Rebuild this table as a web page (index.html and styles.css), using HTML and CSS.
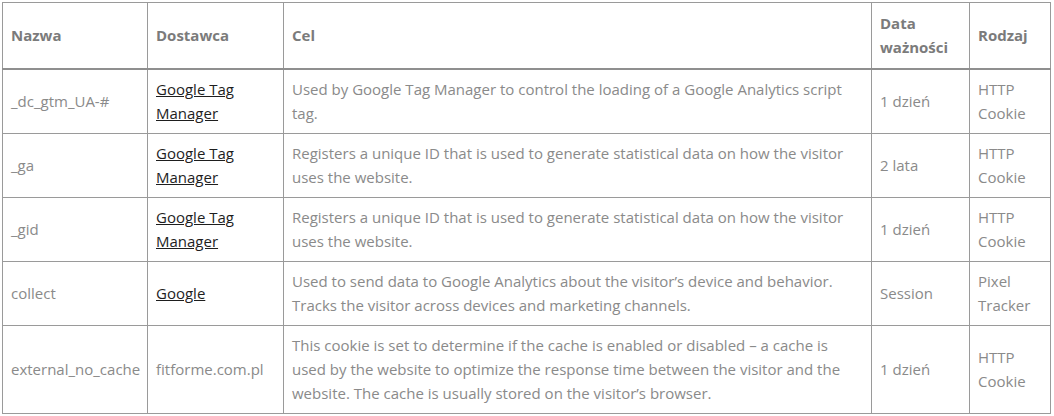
FILE: index.html
```html
<!DOCTYPE html>
<html lang="pl">
<head>
<meta charset="utf-8">
<title>Cookies</title>
<link rel="stylesheet" href="styles.css">
</head>
<body>
<div class="wrap">
<table class="cookies">
  <colgroup>
    <col class="c-name"><col class="c-prov"><col class="c-goal"><col class="c-exp"><col class="c-type">
  </colgroup>
  <thead>
    <tr><th>Nazwa</th><th>Dostawca</th><th>Cel</th><th>Data ważności</th><th>Rodzaj</th></tr>
  </thead>
  <tbody>
    <tr>
      <td>_dc_gtm_UA-#</td>
      <td><a href="#">Google Tag Manager</a></td>
      <td>Used by Google Tag Manager to control the loading of a Google Analytics script tag.</td>
      <td>1 dzień</td>
      <td>HTTP Cookie</td>
    </tr>
    <tr>
      <td>_ga</td>
      <td><a href="#">Google Tag Manager</a></td>
      <td>Registers a unique ID that is used to generate statistical data on how the visitor uses the website.</td>
      <td>2 lata</td>
      <td>HTTP Cookie</td>
    </tr>
    <tr>
      <td>_gid</td>
      <td><a href="#">Google Tag Manager</a></td>
      <td>Registers a unique ID that is used to generate statistical data on how the visitor uses the website.</td>
      <td>1 dzień</td>
      <td>HTTP Cookie</td>
    </tr>
    <tr>
      <td>collect</td>
      <td><a href="#">Google</a></td>
      <td>Used to send data to Google Analytics about the visitor’s device and behavior. Tracks the visitor across devices and marketing channels.</td>
      <td>Session</td>
      <td>Pixel Tracker</td>
    </tr>
    <tr>
      <td>external_no_cache</td>
      <td>fitforme.com.pl</td>
      <td>This cookie is set to determine if the cache is enabled or disabled – a cache is used by the website to optimize the response time between the visitor and the website. The cache is usually stored on the visitor’s browser.</td>
      <td>1 dzień</td>
      <td>HTTP Cookie</td>
    </tr>
  </tbody>
</table>
</div>
</body>
</html>
```
FILE: styles.css
```css
html, body {
  margin: 0;
  padding: 0;
  background: #ffffff;
}
.wrap {
  padding: 2px 0 0 2px;
}
.cookies {
  border-collapse: collapse;
  table-layout: fixed;
  width: 1048px;
  font-family: "Open Sans", "Noto Sans", sans-serif;
  font-size: 15px;
  line-height: 1.57;
  color: #8a8a8a;
}
.c-name { width: 145px; }
.c-prov { width: 136px; }
.c-goal { width: 588px; }
.c-exp { width: 98px; }
.c-type { width: 81px; }
.cookies th,
.cookies td {
  border: 1px solid #9a9a9a;
  padding: 8px 8px;
  text-align: left;
  vertical-align: middle;
}
.cookies th {
  font-weight: 700;
  color: #7b7b7b;
  padding-top: 9px;
  padding-bottom: 9px;
  border-bottom: 2px solid #8f8f8f;
}
.cookies td a {
  color: #1e1e1e;
  text-decoration: underline;
}
```
